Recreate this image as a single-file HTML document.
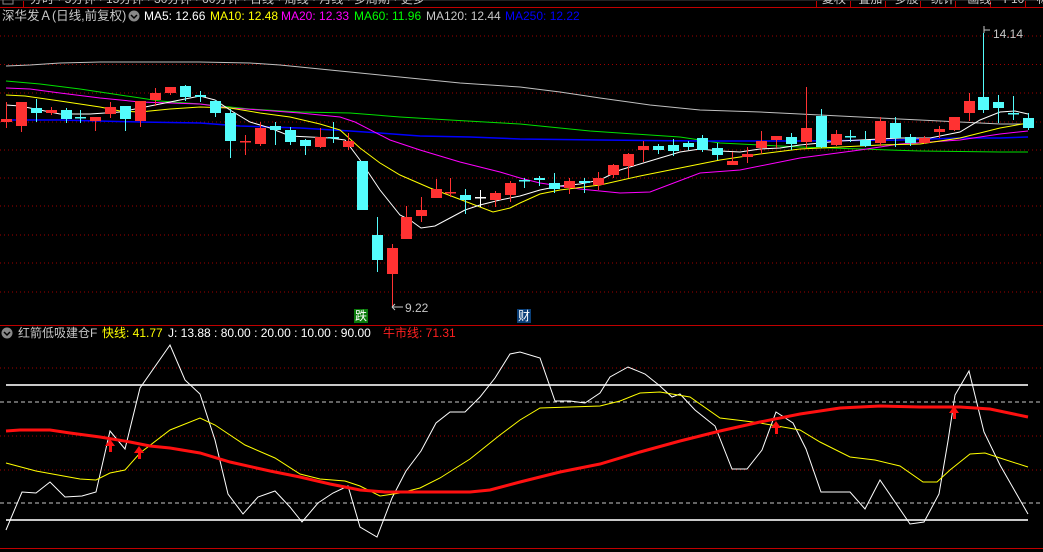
<!DOCTYPE html>
<html><head><meta charset="utf-8">
<style>
html,body{margin:0;padding:0;background:#000;width:1043px;height:552px;overflow:hidden;}
body{position:relative;font-family:"Liberation Sans","Noto Sans CJK SC",sans-serif;}
.t{position:absolute;font-size:12px;white-space:nowrap;line-height:14px;}
svg{position:absolute;left:0;top:0;}
</style></head><body>
<svg id="s" width="1043" height="552" xmlns="http://www.w3.org/2000/svg"></svg>
<div class="t" style="left:2px;top:9px;color:#c8c8c8;font-size:12.5px">深华发Ａ(日线,前复权)</div>
<div class="t" style="left:144px;top:9px;color:#fff">MA5: 12.66</div>
<div class="t" style="left:210px;top:9px;color:#ffff00">MA10: 12.48</div>
<div class="t" style="left:281px;top:9px;color:#ff00ff">MA20: 12.33</div>
<div class="t" style="left:354px;top:9px;color:#00ff00">MA60: 11.96</div>
<div class="t" style="left:426px;top:9px;color:#c8c8c8">MA120: 12.44</div>
<div class="t" style="left:505px;top:9px;color:#0000ff">MA250: 12.22</div>
<div class="t" style="left:18px;top:326px;color:#c8c8c8">红箭低吸建仓F</div>
<div class="t" style="left:102px;top:326px;color:#ffff00">快线: 41.77</div>
<div class="t" style="left:168px;top:326px;color:#fff">J: 13.88 : 80.00 : 20.00 : 10.00 : 90.00</div>
<div class="t" style="left:383px;top:326px;color:#ff2020">牛市线: 71.31</div>
<div class="t" style="left:993px;top:27px;color:#c8c8c8">14.14</div>
<div class="t" style="left:405px;top:301px;color:#c8c8c8">9.22</div>
<div class="t" style="left:354px;top:309px;width:14px;height:14px;background:#0a7a0a;color:#fff;font-size:12px;text-align:center">跌</div>
<div class="t" style="left:517px;top:309px;width:14px;height:14px;background:#0a3f78;color:#fff;font-size:12px;text-align:center">财</div>
<div class="t" style="left:30px;top:-8px;color:#c8c8c8">分时 · 5分钟 · 15分钟 · 30分钟 · 60分钟 · 日线 · 周线 · 月线 · 多周期 · 更多</div>
<div class="t" style="left:822px;top:-8px;color:#c8c8c8;word-spacing:9px">复权 叠加 多股 统计 画线 F10 标</div>
<script>
var s=document.getElementById('s'),h='';
function L(x1,y1,x2,y2,c,w,d){h+='<line x1="'+x1+'" y1="'+y1+'" x2="'+x2+'" y2="'+y2+'" stroke="'+c+'" stroke-width="'+(w||1)+'"'+(d?' stroke-dasharray="'+d+'"':'')+'/>';}
function P(pts,c,w){h+='<polyline fill="none" stroke="'+c+'" stroke-width="'+(w||1)+'" points="'+pts.map(function(p){return p.join(',')}).join(' ')+'"/>';}
L(0,7.5,1043,7.5,'#c00000',1);L(23.5,0,23.5,7,'#c00000');
[816,850,885,920,955,990,1025].forEach(function(x){L(x+.5,0,x+.5,7,'#c00000')});
L(0,0.5,1043,0.5,'#222');
[36,64.5,93,122,150,178,206,235,263,292].forEach(function(y){L(0,y,1043,y,'#a00000',1,'1,3')});
L(0,325.5,1043,325.5,'#c00000',1);
[368,436,470].forEach(function(y){L(0,y,1043,y,'#a00000',1,'1,3')});
L(6,385,1028,385,'#c8c8c8',2);L(6,520,1028,520,'#c8c8c8',2);
L(0,402,1043,402,'#c8c8c8',1,'4,3');L(0,503,1043,503,'#c8c8c8',1,'4,3');
L(0,548.5,1043,548.5,'#c00000',1);
P([[6,66],[30,65],[60,63],[100,62],[200,62],[250,63],[280,65],[330,70],[380,75],[420,79],[460,83],[520,87],[560,92],[600,98],[650,105],[700,110],[760,112],[800,114],[840,116],[880,118],[920,120],[960,122],[1000,124],[1028,124]],'#c0c0c0');
P([[6,81],[40,84],[80,89],[120,95],[160,101],[200,104],[250,109],[300,112],[350,113],[400,117],[450,120],[520,124],[590,131],[680,137],[720,143],[800,147],[860,149],[920,151],[1000,152],[1028,152]],'#00e000');
P([[6,120],[60,120],[140,122],[200,123],[240,126],[300,128],[350,131],[380,133],[420,136],[470,137],[520,139],[600,140],[700,141],[800,141],[900,140],[960,138],[1000,138],[1028,137]],'#0000ff',1.5);
P([[6,88],[30,89],[60,93],[100,98],[140,102],[200,104],[230,108],[260,110],[300,113],[340,117],[355,122],[390,140],[420,150],[460,162],[500,172],[520,178],[540,183],[580,189],[620,193],[650,192],[700,173],[740,170],[800,158],[860,150],[900,144],[960,140],[1000,134],[1028,131]],'#ff00ff');
P([[6,95],[25,96],[60,101],[100,107],[120,111],[140,112],[170,109],[200,107],[230,108],[260,113],[290,117],[320,124],[340,130],[360,148],[380,163],[400,175],[430,188],[467,202],[493,212],[510,208],[520,203],[540,194],[560,190],[600,185],[640,176],[680,168],[720,160],[760,154],[800,149],[840,147],[880,145],[920,144],[960,138],[1000,128],[1028,123]],'#ffff00');
P([[6,105],[20,106],[40,110],[60,114],[90,114],[120,112],[150,106],[180,100],[200,96],[215,100],[230,110],[250,122],[270,128],[290,136],[310,137],[330,138],[345,140],[360,160],[380,190],[400,215],[410,220],[421,228],[435,226],[450,218],[465,210],[480,205],[500,200],[520,196],[540,190],[560,186],[580,184],[600,180],[620,170],[640,164],[660,158],[680,152],[700,149],[720,151],[740,152],[760,149],[780,148],[800,145],[840,141],[880,139],[900,138],[930,138],[960,132],[980,120],[1000,112],[1015,111],[1028,114]],'#ffffff');
var C=[[6,119,122,102,128,'r'],[21,102,126,102,132,'r'],[36,108,113,99,122,'c'],[51,110,113,107,115,'r'],[66,110,119,108,123,'c'],[80,117,117,110,123,'c'],[95,117,121,117,131,'r'],[110,107,114,102,118,'r'],[125,106,119,106,131,'c'],[140,101,121,101,127,'r'],[155,93,100,88,106,'r'],[170,87,93,87,95,'r'],[185,86,97,85,101,'c'],[200,95,97,91,102,'c'],[215,101,113,100,117,'c'],[230,113,141,109,158,'c'],[245,141,141,135,155,'r'],[260,128,144,122,146,'r'],[275,126,130,122,145,'c'],[290,130,142,127,145,'c'],[305,140,146,139,155,'c'],[320,137,147,128,148,'r'],[333,137,137,122,143,'c'],[348,141,147,133,150,'r'],[362,161,210,161,210,'c'],[377,235,260,217,272,'c'],[392,248,274,244,307,'r'],[406,217,239,206,239,'r'],[421,210,216,197,222,'r'],[436,189,198,179,198,'r'],[450,192,192,178,197,'r'],[465,195,200,189,214,'c'],[480,197,197,190,207,'w'],[495,193,200,191,207,'r'],[510,183,195,181,202,'r'],[524,180,180,178,188,'c'],[539,178,180,176,186,'c'],[554,183,189,173,193,'c'],[569,181,188,178,194,'r'],[584,181,183,178,193,'c'],[598,178,185,172,190,'r'],[613,165,175,164,178,'r'],[628,154,166,153,178,'r'],[643,146,150,141,162,'r'],[658,146,150,144,154,'c'],[673,145,151,139,156,'c'],[688,143,147,141,150,'c'],[702,138,150,135,152,'c'],[717,148,155,143,160,'c'],[732,161,165,152,165,'r'],[747,154,157,147,163,'r'],[761,141,148,131,154,'r'],[776,136,140,136,148,'r'],[791,137,144,133,150,'c'],[806,128,142,87,148,'r'],[821,116,147,109,148,'c'],[836,134,145,130,146,'r'],[850,136,136,130,142,'c'],[865,140,146,131,147,'c'],[880,121,143,117,146,'r'],[895,123,138,117,147,'c'],[910,137,143,134,146,'c'],[924,138,143,136,144,'r'],[939,129,132,126,138,'r'],[954,117,130,117,131,'r'],[969,101,113,93,121,'r'],[983,97,110,33,113,'c'],[998,102,108,95,123,'c'],[1013,113,113,96,120,'c'],[1028,118,128,113,130,'c']];
C.forEach(function(k){var col=k[5]=='r'?'#ff3232':k[5]=='c'?'#54fcfc':'#ffffff';
 L(k[0]+.5,k[3],k[0]+.5,k[4],col,1);
 var bh=Math.max(1,k[2]-k[1]);h+='<rect x="'+(k[0]-5)+'" y="'+k[1]+'" width="11" height="'+(bh<2?1.5:bh)+'" fill="'+col+'"/>';});
L(984,30,990,30,'#c8c8c8');L(984,26,984,33,'#c8c8c8');
L(392,307,403,307,'#c8c8c8');L(392,307,395,304,'#c8c8c8');L(392,307,395,310,'#c8c8c8');
P([[6,530],[22,492],[36,493],[50,482],[65,497],[82,496],[96,492],[110,431],[125,449],[140,388],[170,345],[185,380],[200,394],[215,440],[228,494],[243,514],[258,497],[275,491],[290,507],[302,522],[318,503],[333,493],[348,486],[360,527],[377,537],[392,498],[406,471],[421,451],[436,423],[450,412],[465,412],[480,397],[495,378],[510,354],[520,352],[540,358],[555,401],[570,401],[585,403],[600,393],[610,377],[628,367],[645,374],[660,386],[672,397],[680,394],[695,410],[715,426],[732,469],[747,469],[762,450],[776,412],[793,423],[806,449],[821,492],[840,492],[850,492],[865,509],[880,480],[910,524],[924,522],[939,494],[948,441],[955,395],[969,371],[984,432],[1000,465],[1028,514]],'#ffffff');
P([[6,463],[36,471],[80,479],[96,480],[110,473],[125,470],[140,453],[170,430],[200,418],[215,425],[245,445],[275,458],[300,474],[320,479],[345,481],[360,486],[380,496],[400,493],[420,488],[440,478],[470,459],[500,435],[520,420],[540,408],[600,406],[620,401],[640,393],[660,392],[690,397],[720,418],[745,421],[760,423],[800,430],[820,442],[850,457],[875,460],[900,466],[923,482],[937,482],[950,470],[970,454],[985,453],[1000,458],[1028,467]],'#ffff00');
P([[6,431],[20,430],[50,430],[70,433],[100,437],[130,442],[150,446],[170,448],[200,453],[230,462],[270,471],[300,477],[330,484],[360,490],[385,492],[420,492],[470,492],[490,490],[520,482],[540,477],[560,472],[600,464],[640,452],[680,441],[720,431],[760,422],[800,414],[840,408],[880,406],[920,407],[960,407],[990,409],[1028,417]],'#ff1010',3);
[[110,439],[139,446],[776,421],[954,406]].forEach(function(a){var x=a[0],y=a[1];
 h+='<polygon points="'+(x-5)+','+(y+7)+' '+x+','+y+' '+(x+5)+','+(y+7)+'" fill="#ff1010"/>';
 h+='<rect x="'+(x-1)+'" y="'+(y+6)+'" width="3" height="7" fill="#ff1010"/>';});
h+='<circle cx="134" cy="16" r="5.5" fill="#888"/><path d="M131,15 L134,18 L137,15" stroke="#000" stroke-width="1.5" fill="none"/>';
h+='<circle cx="7" cy="333" r="5.5" fill="#888"/><path d="M4,332 L7,335 L10,332" stroke="#000" stroke-width="1.5" fill="none"/>';
h+='<rect x="3" y="-4" width="10" height="8" fill="none" stroke="#888"/>';
s.innerHTML=h;
</script>
</body></html>
